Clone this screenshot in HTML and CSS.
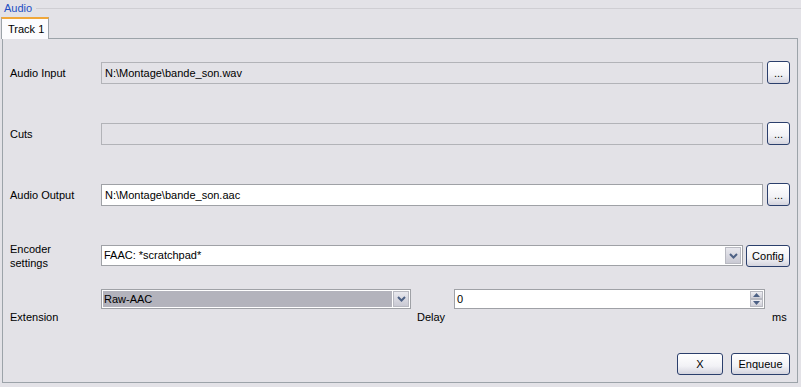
FILE: index.html
```html
<!DOCTYPE html>
<html lang="en">
<head>
  <meta charset="UTF-8">
  <title>Audio</title>
  <link rel="stylesheet" href="styles.css">
</head>
<body>
  <div class="group">
    <div class="group-title"><span>Audio</span></div>
    <div class="tabs">
      <div class="tab active">Track 1</div>
    </div>
    <div class="pane">
      <div class="row">
        <label class="label">Audio Input</label>
        <div class="field disabled">N:\Montage\bande_son.wav</div>
        <button class="btn browse">...</button>
      </div>
      <div class="row">
        <label class="label">Cuts</label>
        <div class="field disabled"></div>
        <button class="btn browse">...</button>
      </div>
      <div class="row">
        <label class="label">Audio Output</label>
        <div class="field">N:\Montage\bande_son.aac</div>
        <button class="btn browse">...</button>
      </div>
      <div class="row">
        <label class="label">Encoder<br>settings</label>
        <div class="combo encoder">
          <span class="combo-value">FAAC: *scratchpad*</span>
          <span class="combo-arrow">
            <svg width="9" height="6" viewBox="0 0 9 6"><path d="M1 1 L4.5 4.5 L8 1" fill="none" stroke="#4d6185" stroke-width="2"/></svg>
          </span>
        </div>
        <button class="btn config">Config</button>
      </div>
      <div class="row ext">
        <label class="label">Extension</label>
        <div class="combo extension">
          <span class="combo-value selected">Raw-AAC</span>
          <span class="combo-arrow">
            <svg width="9" height="6" viewBox="0 0 9 6"><path d="M1 1 L4.5 4.5 L8 1" fill="none" stroke="#4d6185" stroke-width="2"/></svg>
          </span>
        </div>
        <span class="delay">Delay</span>
        <div class="spin">
          <span class="spin-value">0</span>
          <span class="spin-btns">
            <span class="spin-btn"><svg width="7" height="4" viewBox="0 0 7 4"><path d="M0 4 L3.5 0 L7 4 Z" fill="#4d6185"/></svg></span>
            <span class="spin-btn"><svg width="7" height="4" viewBox="0 0 7 4"><path d="M0 0 L3.5 4 L7 0 Z" fill="#4d6185"/></svg></span>
          </span>
        </div>
        <span class="ms">ms</span>
      </div>
      <div class="actions">
        <button class="btn cancel">X</button>
        <button class="btn enqueue">Enqueue</button>
      </div>
    </div>
  </div>
</body>
</html>
```

FILE: styles.css
```css
body {
  margin: 0;
  font-family: "Liberation Sans", Arial, sans-serif;
  font-size: 11px;
  color: #000;
  background-color: #e3e2e7;
  width: 801px;
  height: 387px;
  overflow: hidden;
}
.group-title {
  display: flex;
  align-items: center;
  height: 16px;
  padding-left: 4px;
}
.group-title span {
  color: #1f4fc3;
  padding-right: 4px;
}
.group-title::after {
  content: "";
  flex: 1;
  height: 1px;
  background-color: #cfced3;
  margin-top: 1px;
}
.tabs {
  display: flex;
  height: 21px;
  margin-top: 1px;
  padding-left: 1px;
}
.tab {
  width: 48px;
  box-sizing: border-box;
  padding: 4px 0 0 6px;
  background-color: #fcfcfe;
  border-top: 2px solid #f0a73a;
  border-left: 1px solid #9ca3a9;
  border-right: 1px solid #9ca3a9;
  position: relative;
  z-index: 1;
  height: 22px;
}
.pane {
  margin: 0 3px 0 2px;
  border: 1px solid #9ca3a9;
  padding: 3px 7px 7px 7px;
  background-color: #e3e2e7;
}
.row {
  display: flex;
  align-items: center;
  height: 61px;
}
.label {
  flex: 0 0 91px;
  line-height: 14px;
}
.field {
  flex: 1;
  height: 22px;
  box-sizing: border-box;
  border: 1px solid #9fa1a6;
  background-color: #fff;
  padding: 0 3px;
  line-height: 20px;
  white-space: nowrap;
}
.field.disabled {
  background-color: #e3e2e7;
  border-color: #b2b3b8;
}
.btn {
  font-family: "Liberation Sans", Arial, sans-serif;
  font-size: 11px;
  color: #000;
  height: 23px;
  box-sizing: border-box;
  border: 1px solid #2b3f6c;
  border-radius: 3px;
  background: linear-gradient(#ffffff, #f2f2f6 60%, #d4d4de);
  padding: 0;
  cursor: pointer;
}
.browse {
  width: 23px;
  margin-left: 4px;
  line-height: 14px;
}
.combo {
  display: flex;
  height: 21px;
  box-sizing: border-box;
  border: 1px solid #9fa1a6;
  background-color: #fff;
  padding: 1px;
}
.combo-value {
  flex: 1;
  padding-left: 1px;
  line-height: 17px;
}
.combo-value.selected {
  background-color: #b3b3bc;
  margin-right: 1px;
}
.combo-arrow {
  width: 16px;
  display: flex;
  align-items: center;
  justify-content: center;
  background: linear-gradient(#e8e8ee, #c9c9d3);
  border: 1px solid #b8b9c1;
  box-sizing: border-box;
}
.encoder {
  flex: 1;
}
.config {
  width: 44px;
  height: 22px;
  margin-left: 3px;
}
.extension {
  flex: 0 0 310px;
  align-self: flex-start;
  margin-top: 3px;
  height: 20px;
}
.delay {
  flex: 0 0 43px;
  box-sizing: border-box;
  padding-left: 6px;
}
.spin {
  flex: 1;
  display: flex;
  align-self: flex-start;
  margin-top: 3px;
  height: 20px;
  box-sizing: border-box;
  border: 1px solid #9fa1a6;
  background-color: #fff;
  padding: 1px;
}
.spin-value {
  flex: 1;
  padding-left: 1px;
  line-height: 16px;
}
.spin-btns {
  display: flex;
  flex-direction: column;
  width: 13px;
}
.spin-btn {
  flex: 1;
  display: flex;
  align-items: center;
  justify-content: center;
  border: 1px solid #b8b9c1;
  background: linear-gradient(#eeeef3, #cfcfd8);
}
.ms {
  flex: 0 0 25px;
  box-sizing: border-box;
  padding-left: 7px;
}
.actions {
  display: flex;
  justify-content: flex-end;
  margin-top: 6px;
  height: 22px;
}
.actions .btn {
  height: 22px;
}
.cancel {
  width: 46px;
}
.enqueue {
  width: 59px;
  margin-left: 8px;
}
```
